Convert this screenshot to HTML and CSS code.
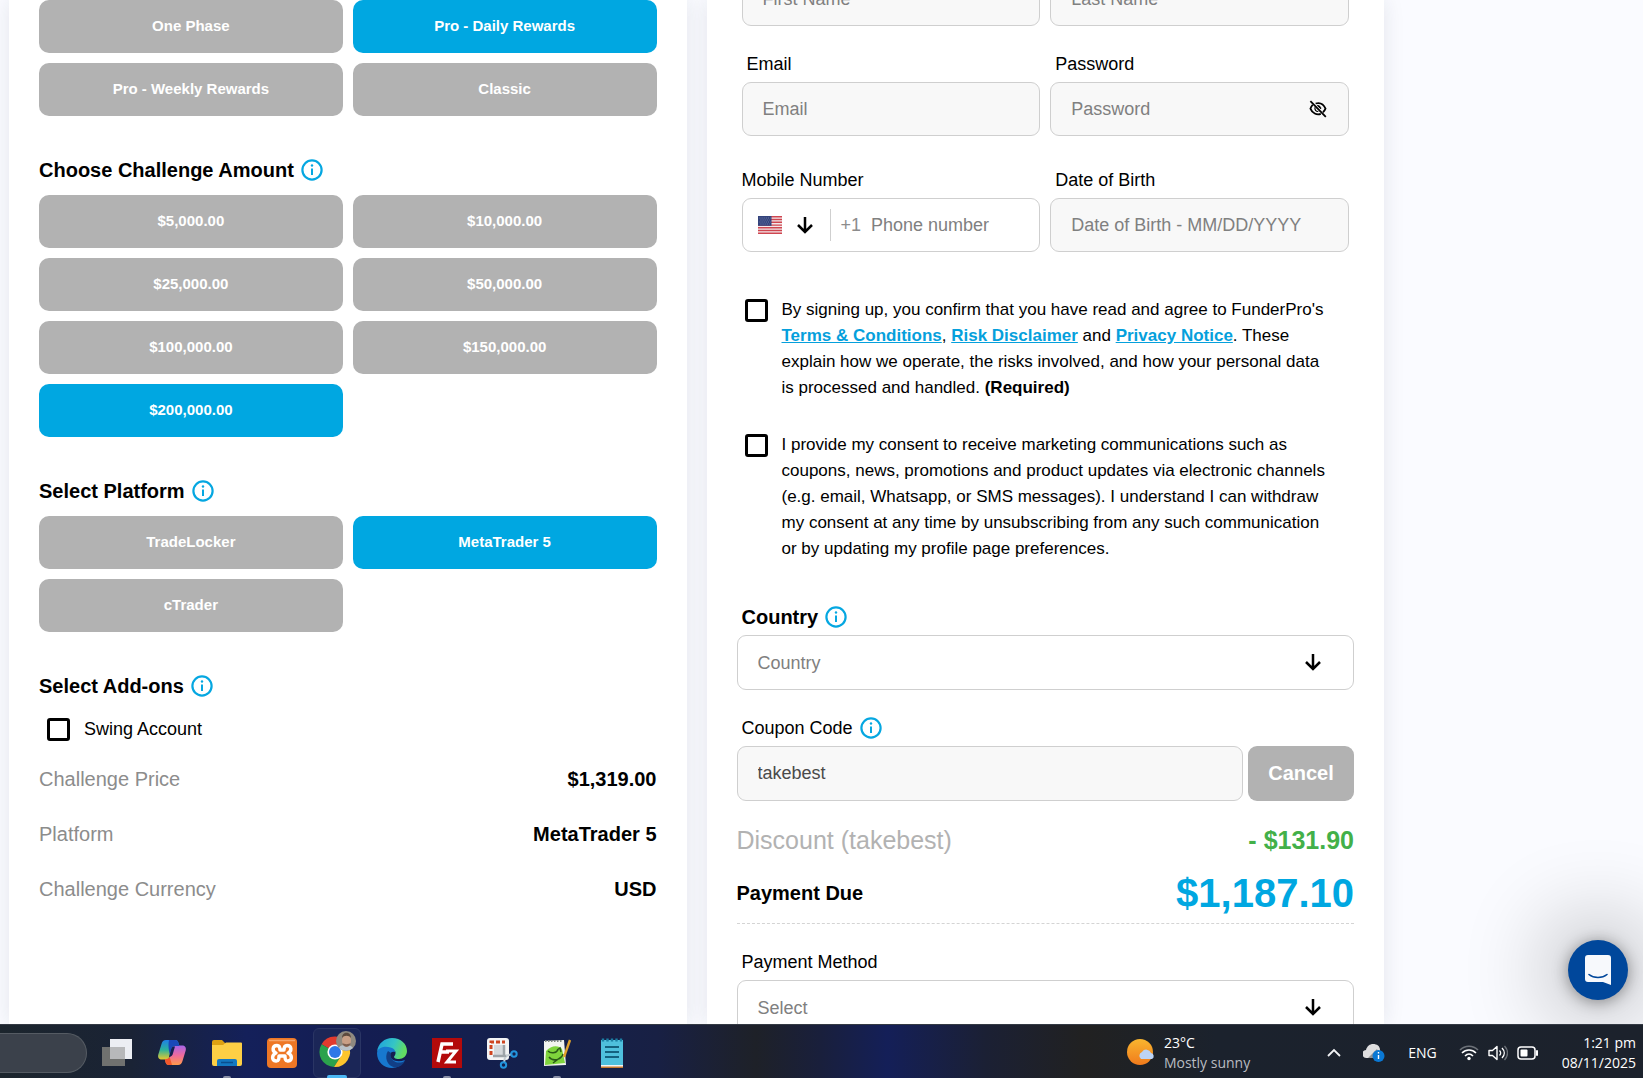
FILE: index.html
```html
<!DOCTYPE html>
<html lang="en">

<head>
  <meta charset="UTF-8" />
  <title>FunderPro Checkout</title>
  <meta name="viewport" content="width=device-width, initial-scale=1.0" />
  <link rel="stylesheet" href="styles.css">
</head>

<body>
  <!-- shared icons -->
  <svg class="sprite" aria-hidden="true">
    <symbol id="icon-info" viewBox="0 0 22 22">
      <circle cx="11" cy="11" r="9.6" fill="none" stroke="#05a7e1" stroke-width="2.2" />
      <path d="M11 9.4v6.6" stroke="#05a7e1" stroke-width="2" />
      <circle cx="11" cy="6.5" r="1.2" fill="#05a7e1" />
    </symbol>
    <symbol id="icon-arrow" viewBox="0 0 18 18">
      <path d="M9 1v15M2 9l7 7 7-7" fill="none" stroke="#000" stroke-width="2.5" />
    </symbol>
  </svg>

  <main class="page">
    <div class="columns">
      <section class="card challenge">
        <div class="options">
          <button class="option">One Phase</button>
          <button class="option active">Pro - Daily Rewards</button>
          <button class="option">Pro - Weekly Rewards</button>
          <button class="option">Classic</button>
        </div>

        <h2 class="section-title">Choose Challenge Amount <svg class="info"><use href="#icon-info" /></svg></h2>
        <div class="options">
          <button class="option">$5,000.00</button>
          <button class="option">$10,000.00</button>
          <button class="option">$25,000.00</button>
          <button class="option">$50,000.00</button>
          <button class="option">$100,000.00</button>
          <button class="option">$150,000.00</button>
          <button class="option active">$200,000.00</button>
        </div>

        <h2 class="section-title">Select Platform <svg class="info"><use href="#icon-info" /></svg></h2>
        <div class="options">
          <button class="option">TradeLocker</button>
          <button class="option active">MetaTrader 5</button>
          <button class="option">cTrader</button>
        </div>

        <h2 class="section-title">Select Add-ons <svg class="info"><use href="#icon-info" /></svg></h2>
        <div class="addon">
          <input type="checkbox" class="check" id="swing" />
          <label for="swing">Swing Account</label>
        </div>

        <dl class="summary">
          <div class="summary-row">
            <dt>Challenge Price</dt>
            <dd>$1,319.00</dd>
          </div>
          <div class="summary-row">
            <dt>Platform</dt>
            <dd>MetaTrader 5</dd>
          </div>
          <div class="summary-row">
            <dt>Challenge Currency</dt>
            <dd>USD</dd>
          </div>
        </dl>
      </section>

      <form class="card account">
        <div class="fields">
          <div class="field">
            <input type="text" class="control" placeholder="First Name" aria-label="First Name" />
          </div>
          <div class="field">
            <input type="text" class="control" placeholder="Last Name" aria-label="Last Name" />
          </div>
          <div class="field">
            <label class="indent" for="email">Email</label>
            <input type="email" class="control" id="email" placeholder="Email" />
          </div>
          <div class="field">
            <label class="indent" for="password">Password</label>
            <div class="password-box">
              <input type="password" class="control" id="password" placeholder="Password" />
              <button type="button" class="eye" aria-label="Show password">
                <svg width="18" height="18" viewBox="0 0 18 18" fill="none" stroke="#000" stroke-width="1.8">
                  <path d="M1.4 1.2l15.4 15.6" />
                  <path d="M6.6 3.5C11 2.2 14.7 4.400 16.500 8.600c-.6 1.500-1.400 2.700-2.500 3.600" />
                  <path d="M3.700 4.800C2.700 5.800 1.900 7.100 1.400 8.700c1.900 4.600 6.200 6.600 10.400 5.200" />
                  <path d="M8.400 5.600c1.900-.3 3.600 1.300 3.400 3.200z" fill="#000" stroke-width="1" />
                  <path d="M6.100 7.300c-.8 2.300.9 4.400 3.200 4.200" stroke-width="1.200" />
                </svg>
              </button>
            </div>
          </div>
          <div class="field spaced">
            <label for="phone">Mobile Number</label>
            <div class="phone-box">
              <button type="button" class="phone-country" aria-label="Country code">
                <svg width="24" height="18" viewBox="0 0 24 18">
                  <path d="M0 0h24v18H0z" fill="#f3e9ea" />
                  <path d="M0 .7h24M0 3.500h24M0 6.300h24M0 9.100h24M0 11.800h24M0 14.500h24M0 17.300h24" stroke="#cf4650" stroke-width="1.400" />
                  <path d="M0 0h13.500v9.800H0z" fill="#33437c" />
                  <path d="M1.500 2h11M2.500 4h9M1.500 6h11M2.500 8h9" stroke="#8e98bd" stroke-width=".8" stroke-dasharray=".9 1.200" />
                </svg>
                <svg class="arrow"><use href="#icon-arrow" /></svg>
              </button>
              <span class="dial-code">+1</span>
              <input type="tel" id="phone" placeholder="Phone number" />
            </div>
          </div>
          <div class="field spaced">
            <label class="indent" for="dob">Date of Birth</label>
            <input type="text" class="control" id="dob" placeholder="Date of Birth - MM/DD/YYYY" />
          </div>
        </div>

        <div class="consents">
          <div class="consent">
            <input type="checkbox" class="check" id="terms" />
            <label for="terms">By signing up, you confirm that you have read and agree to FunderPro's <a href="#">Terms &amp; Conditions</a>, <a href="#">Risk Disclaimer</a> and <a href="#">Privacy Notice</a>. These explain how we operate, the risks involved, and how your personal data is processed and handled. <b>(Required)</b></label>
          </div>
          <div class="consent">
            <input type="checkbox" class="check" id="marketing" />
            <label for="marketing">I provide my consent to receive marketing communications such as coupons, news, promotions and product updates via electronic channels (e.g. email, Whatsapp, or SMS messages). I understand I can withdraw my consent at any time by unsubscribing from any such communication or by updating my profile page preferences.</label>
          </div>
        </div>

        <div class="payment">
          <label class="payment-label strong" for="country">Country <svg class="info"><use href="#icon-info" /></svg></label>
          <div class="select-box">
            <select class="control" id="country">
              <option>Country</option>
            </select>
            <svg class="arrow"><use href="#icon-arrow" /></svg>
          </div>

          <label class="payment-label" for="coupon">Coupon Code <svg class="info"><use href="#icon-info" /></svg></label>
          <div class="coupon">
            <input type="text" class="control" id="coupon" value="takebest" />
            <button type="button" class="cancel">Cancel</button>
          </div>

          <div class="discount">
            <span>Discount (takebest)</span>
            <b>- $131.90</b>
          </div>
          <div class="due">
            <span>Payment Due</span>
            <b>$1,187.10</b>
          </div>

          <label class="payment-label" for="method">Payment Method</label>
          <div class="select-box">
            <select class="control" id="method">
              <option>Select</option>
            </select>
            <svg class="arrow"><use href="#icon-arrow" /></svg>
          </div>
        </div>
      </form>
    </div>

    <button class="chat-btn" aria-label="Open chat">
      <svg width="28" height="32" viewBox="0 0 28 32">
        <path d="M4 1h20a3 3 0 0 1 3 3v27l-8-3H4a3 3 0 0 1-3-3V4a3 3 0 0 1 3-3z" fill="#f7f9fc" />
        <path d="M5 20.500c5 4 13 4 18 0" fill="none" stroke="#00479b" stroke-width="1.600" stroke-linecap="round" />
      </svg>
    </button>
  </main>

  <footer class="taskbar">
    <div class="search-pill"></div>
    <div class="apps">
      <button class="app" aria-label="Task view">
        <svg width="32" height="32" viewBox="0 0 32 32">
          <path d="M9 2h22v20H9z" fill="#eceef3" />
          <path d="M1 10h23v19H1z" fill="#70716f" />
          <path d="M9 10h15v12H9z" fill="#b7b8ba" />
        </svg>
      </button>
      <button class="app" aria-label="Copilot">
        <svg width="32" height="32" viewBox="0 0 32 32">
          <defs>
            <linearGradient id="cop-a" x1="0" y1="0" x2="0" y2="1">
              <stop offset="0" stop-color="#1f7fe8" />
              <stop offset=".5" stop-color="#2bb39c" />
              <stop offset="1" stop-color="#e9c82c" />
            </linearGradient>
            <linearGradient id="cop-b" x1="0" y1="0" x2="0" y2="1">
              <stop offset="0" stop-color="#a765e8" />
              <stop offset=".5" stop-color="#ef6a9c" />
              <stop offset="1" stop-color="#ff9a4a" />
            </linearGradient>
          </defs>
          <path d="M10 3h9c2 0 3 1 3.500 3l.8 3H19c-2 0-3 1-3.500 3l-2.300 8c-.5 1.500-1.200 2.500-3 2.500H6c-3 0-4.500-2-3.700-5L5.500 7C6.300 4.500 7.500 3 10 3z" fill="url(#cop-a)" />
          <path d="M22 28h-9c-2 0-3-1-3.500-3L9 22h1.500c2 0 3-1 3.500-3l2.500-8c.5-1.500 1.200-2.500 3-2.500H26c3 0 4.500 2 3.700 5L26.500 24c-.8 2.500-2 4-4.500 4z" fill="url(#cop-b)" />
          <path d="M13 3h6c2 0 3 1 3.500 3l.8 3H19c-2 0-3 1-3.500 3l-1.700 6c-.6-4-2-8-.8-15z" fill="#1b49b8" />
          <path d="M9 22h1.500c1.600 0 2.600-.7 3.200-2L16 28h-3c-2 0-3-1-3.500-3z" fill="#f2572b" />
          <path d="M19 9.500h-1c-1.500 0-2.200 1.200-2.700 2.800L13 20c1.500-.2 3-.8 3.600-2.500z" fill="#16214f" />
        </svg>
      </button>
      <button class="app running" aria-label="File Explorer">
        <svg width="32" height="32" viewBox="0 0 32 32">
          <path d="M1 5a2 2 0 0 1 2-2h8l3 3v4H1z" fill="#dea112" />
          <path d="M1 8h11l3-2.500h15a1 1 0 0 1 1 1V27a2 2 0 0 1-2 2H3a2 2 0 0 1-2-2z" fill="#fdcf45" />
          <path d="M6 29v-5a2 2 0 0 1 2-2h16a2 2 0 0 1 2 2v5z" fill="#1478c2" />
          <path d="M10 25.500h12" stroke="#0a4f8f" stroke-width="1.500" />
        </svg>
      </button>
      <button class="app" aria-label="XAMPP">
        <svg width="32" height="32" viewBox="0 0 32 32">
          <rect x="1" y="1" width="30" height="30" rx="4" fill="#ee7725" />
          <path d="M3 3.500h26" stroke="#f6a56b" stroke-width="1.500" />
          <path d="M11 8.500c-5 0-5 6-1 7.500-4 1.500-5 7.500 0 8 3 .2 3-3 3-5h6c0 2 0 5.200 3 5 5-.5 4-6.500 0-8 4-1.500 4-7.500-1-7.500-3 0-3 2.500-3 4.500h-4c0-2 0-4.500-3-4.500z" fill="none" stroke="#fff" stroke-width="3.400" stroke-linejoin="round" />
        </svg>
      </button>
      <button class="app current" aria-label="Chrome">
        <svg width="38" height="38" viewBox="0 0 38 38">
          <path d="M17 21L3.600 13.300A15 15 0 0 1 30.500 14.500L17 14z" fill="#e23b2e" />
          <path d="M17 21L23 25 16 36A15 15 0 0 1 3.600 13.300z" fill="#2ba24c" />
          <path d="M17 14h13.200A15 15 0 0 1 16 36l7-11z" fill="#fdc52d" />
          <circle cx="17" cy="21" r="7.600" fill="#fff" />
          <circle cx="17" cy="21" r="6" fill="#2f78e8" />
          <circle cx="28" cy="10" r="10" fill="#8f8a80" />
          <path d="M21 17c1-3 4-3 7-3s6 1 7 3a10 10 0 0 1-14 0z" fill="#b9c2c9" />
          <ellipse cx="28.500" cy="9.500" rx="4.500" ry="6.500" fill="#c99f86" />
          <path d="M24 7c0-7 9-7 9 0-2-3-7-3-9 0z" fill="#5d4a3e" />
          <path d="M24.500 12c1.500 1.500 6.500 1.500 8 0 0 5-8 5-8 0z" fill="#7d5f50" />
        </svg>
      </button>
      <button class="app" aria-label="Edge">
        <svg width="32" height="32" viewBox="0 0 32 32">
          <defs>
            <linearGradient id="edge-a" x1="0" y1="0" x2="1" y2=".3">
              <stop offset="0" stop-color="#1d9fe0" />
              <stop offset=".6" stop-color="#35c5c5" />
              <stop offset="1" stop-color="#62dc62" />
            </linearGradient>
          </defs>
          <path d="M1 16C2 9 8 7 13 8c4 1 7 4 6 7-3-1-5 1-5 3 0 5 7 8 15 5-3 5-8 8-13 8C8 31 1 25 1 16z" fill="#1778cf" />
          <path d="M1 15C2 6 9 1 16 1c9 0 15 6 15 13 0 5-4 8-8 8-4 0-6-1.500-4.500-3 2.500-3 .5-7.500-4-8.500C9 9 3 10 1 15z" fill="url(#edge-a)" />
          <path d="M12 14c-4 6-1 15 7 16.500 5-.5 8-3 10-6.500-7 4-16 0-14-8z" fill="#123f86" />
        </svg>
      </button>
      <button class="app running" aria-label="FileZilla">
        <svg width="32" height="32" viewBox="0 0 32 32">
          <path d="M1 1h30v30H1z" fill="#b30a0b" />
          <path d="M7 25L11 7h11M9 15h9" fill="none" stroke="#fff" stroke-width="3.500" />
          <path d="M15 14h10l-9 11h9" fill="none" stroke="#fff" stroke-width="3" />
        </svg>
      </button>
      <button class="app" aria-label="Snipping Tool">
        <svg width="32" height="32" viewBox="0 0 32 32">
          <rect x="1" y="1" width="22" height="22" rx="3" fill="#f3f4f5" />
          <path d="M5 18V5h14" fill="none" stroke="#cf4520" stroke-width="3" stroke-dasharray="4 2" />
          <path d="M8 8h10v11H8z" fill="#d6d9dc" />
          <path d="M18 8v12M7 19h14" stroke="#9da3a8" stroke-width="2.500" />
          <path d="M20 19l6-2M19 20l-1 6" stroke="#c3ccd2" stroke-width="2" />
          <circle cx="28" cy="17" r="2.700" fill="none" stroke="#2294dd" stroke-width="2" />
          <circle cx="17.500" cy="28" r="2.700" fill="none" stroke="#2294dd" stroke-width="2" />
        </svg>
      </button>
      <button class="app running" aria-label="Notepad++">
        <svg width="32" height="32" viewBox="0 0 32 32">
          <path d="M3 4l20-1 2 25-22 1z" fill="#f1f4ee" />
          <path d="M5 14c5-6 13-6 16-2l3 14-20 2z" fill="#7fd43c" />
          <path d="M7 14c3 3 8 2 10-1M16 13l3-2 1 4M8 20c4 5 12 3 14-3M12 26l8-6" fill="none" stroke="#2a5a17" stroke-width="1.500" />
          <path d="M4 4h18" stroke="#7c8480" stroke-width="2" stroke-dasharray="1.500 1.500" />
          <path d="M29 3l-6 17" stroke="#e0a22b" stroke-width="2.400" />
        </svg>
      </button>
      <button class="app" aria-label="Notepad">
        <svg width="32" height="32" viewBox="0 0 32 32">
          <path d="M5 27h22v4H5z" fill="#c77b2e" />
          <path d="M5 3h22v25H5z" fill="#4fc0dd" />
          <path d="M5 28h22v1.500H5z" fill="#f4f4f4" />
          <path d="M9 10h14M9 15h14M9 20h14" stroke="#14617f" stroke-width="1.800" />
          <path d="M7 1.500v3M11.500 1.500v3M16 1.500v3M20.500 1.500v3M25 1.500v3" stroke="#1b7fa3" stroke-width="2.400" />
        </svg>
      </button>
    </div>

    <div class="weather">
      <svg width="30" height="30" viewBox="0 0 30 30">
        <defs>
          <linearGradient id="sun" x1="0" y1="0" x2="0" y2="1">
            <stop offset="0" stop-color="#f9b62f" />
            <stop offset="1" stop-color="#f07a1c" />
          </linearGradient>
        </defs>
        <circle cx="14" cy="14" r="13" fill="url(#sun)" />
        <path d="M15 21a4 4 0 0 1 1-7 5 5 0 0 1 9 1 3.200 3.200 0 0 1 1 6z" fill="#bcd3f5" />
      </svg>
      <div>
        <div>23°C</div>
        <div class="muted">Mostly sunny</div>
      </div>
    </div>

    <div class="tray">
      <svg width="16" height="16" viewBox="0 0 16 16">
        <path d="M2 11l6-6 6 6" fill="none" stroke="#f2f3f5" stroke-width="1.800" />
      </svg>
      <svg class="cloud" width="22" height="20" viewBox="0 0 22 20">
        <path d="M4 15a4 4 0 0 1-1-8C4 3 7 1 10 1c4 0 7 2 7 6v8z" fill="#dededf" />
        <path d="M5 15l9-9 4 9z" fill="#8f9092" />
        <circle cx="15.500" cy="13" r="6" fill="#0a78d4" />
        <path d="M15.500 12v4M15.500 9v1.600" stroke="#fff" stroke-width="1.400" />
      </svg>
      <span class="lang">ENG</span>
      <div class="status">
        <svg width="20" height="18" viewBox="0 0 20 18" fill="none" stroke-width="1.600">
          <path d="M1 6c5-5 13-5 18 0" stroke="#6c7178" />
          <path d="M3 9c4-4 10-4 14 0M6 12c2.500-2.500 5.500-2.500 8 0" stroke="#fff" />
          <circle cx="10" cy="14.500" r="1.700" fill="#fff" />
        </svg>
        <svg width="20" height="18" viewBox="0 0 20 18" fill="none" stroke="#fff" stroke-width="1.400">
          <path d="M1 6.500h3.500L9 2.500v13l-4.500-4H1z" stroke-linejoin="round" />
          <path d="M11.500 6.500c1.500 1.500 1.500 3.500 0 5M14 4c3 3 3 7 0 10" />
          <path d="M16.500 2c4 4 4 10 0 14" stroke="#6c7178" />
        </svg>
        <svg width="22" height="18" viewBox="0 0 22 18">
          <rect x="1" y="3" width="17" height="12" rx="3" fill="none" stroke="#fff" stroke-width="1.500" />
          <rect x="3.500" y="5.500" width="7" height="7" rx="1" fill="#fff" />
          <path d="M20 7v4" stroke="#fff" stroke-width="2" stroke-linecap="round" />
        </svg>
      </div>
      <div class="clock">
        <div>1:21 pm</div>
        <div>08/11/2025</div>
      </div>
    </div>
  </footer>
</body>

</html>
```

FILE: styles.css
```css
* {
  box-sizing: border-box;
}

body {
  margin: 0;
  height: 100vh;
  display: flex;
  flex-direction: column;
  overflow: hidden;
  font-family: "Liberation Sans", Arial, sans-serif;
  font-size: 18px;
  color: #000;
}

button,
input,
select {
  font-family: inherit;
}

button {
  cursor: pointer;
}

.sprite {
  position: absolute;
  width: 0;
  height: 0;
}

.page {
  flex: 1;
  min-height: 0;
  position: relative;
  overflow: hidden;
  background: #fafbff;
}

.columns {
  display: grid;
  grid-template-columns: 1fr 1fr;
  gap: 20px;
  height: 100%;
  padding: 0 259px 0 9px;
}

.card {
  background: #fff;
  box-shadow: 0 0 20px rgba(30, 40, 70, 0.1);
  overflow: hidden;
}

.info {
  width: 22px;
  height: 22px;
  flex: none;
}

.arrow {
  width: 18px;
  height: 18px;
  flex: none;
}

/* left card */

.challenge {
  padding: 0 30px;
}

.options {
  display: grid;
  grid-template-columns: 1fr 1fr;
  gap: 10px;
}

.option {
  height: 53px;
  padding: 0 6px 3px;
  border: none;
  border-radius: 10px;
  background: #b2b2b2;
  color: #fff;
  font-size: 15px;
  font-weight: bold;
}

.option.active {
  background: #00a7e1;
}

.section-title {
  display: flex;
  align-items: center;
  gap: 7px;
  margin: 42px 0 13px;
  font-size: 20px;
  line-height: 24px;
}

.addon {
  display: flex;
  align-items: center;
  gap: 14px;
  padding: 7px 8px 0;
}

.check {
  appearance: none;
  flex: none;
  width: 23px;
  height: 23px;
  margin: 0;
  border: 3px solid #000;
  border-radius: 3px;
  background: #fff;
}

.summary {
  margin: 11px 0 0;
  font-size: 20px;
}

.summary-row {
  display: flex;
  justify-content: space-between;
  align-items: center;
  height: 55px;
}

.summary dt {
  color: #8c8c8c;
}

.summary dd {
  margin: 0;
  font-weight: bold;
}

/* right card */

.account {
  padding: 0 30px;
}

.fields {
  display: grid;
  grid-template-columns: repeat(2, minmax(0, 1fr));
  gap: 27px 10px;
  margin: -28px 5px 0;
}

.field label {
  display: block;
  padding-bottom: 7px;
  line-height: 22px;
}

.field .indent {
  padding-left: 5px;
}

.field.spaced {
  padding-top: 6px;
}

.control {
  display: block;
  width: 100%;
  height: 54px;
  padding: 0 20px;
  border: 1px solid #cfcfcf;
  border-radius: 9px;
  background: #f8f8f8;
  font-size: 18px;
  color: #4a4a4a;
}

::placeholder {
  color: #808080;
  opacity: 1;
}

.password-box,
.select-box {
  position: relative;
}

.eye {
  position: absolute;
  top: 18px;
  right: 22px;
  width: 18px;
  height: 18px;
  padding: 0;
  border: none;
  background: none;
}

.phone-box {
  display: flex;
  align-items: center;
  height: 54px;
  border: 1px solid #cfcfcf;
  border-radius: 9px;
}

.phone-country {
  display: flex;
  align-items: center;
  gap: 14px;
  height: 32px;
  padding: 0 16px 0 15px;
  border: none;
  border-right: 1px solid #cfcfcf;
  background: none;
}

.dial-code {
  padding: 0 10px;
  color: #8c8c8c;
}

.phone-box input {
  flex: 1;
  min-width: 0;
  padding: 0;
  border: none;
  outline: none;
  font-size: 18px;
}

.consents {
  display: flex;
  flex-direction: column;
  gap: 31px;
  padding: 45px 24px 0 8px;
}

.consent {
  display: flex;
  gap: 14px;
}

.consent .check {
  margin-top: 2px;
}

.consent label {
  font-size: 17px;
  line-height: 26px;
}

.consent a {
  color: #05a0dc;
  font-weight: bold;
}

.payment {
  padding-top: 17px;
}

.payment-label {
  display: flex;
  align-items: center;
  gap: 7px;
  height: 22px;
  margin: 27px 5px 7px;
}

.payment-label.strong {
  font-size: 20px;
  font-weight: bold;
}

.payment .control {
  height: 55px;
}

.select-box select {
  appearance: none;
  background: #fff;
  color: #808080;
}

.select-box .arrow {
  position: absolute;
  top: 18px;
  right: 32px;
  pointer-events: none;
}

.coupon {
  display: flex;
  gap: 5px;
}

.cancel {
  flex: none;
  width: 106px;
  border: none;
  border-radius: 9px;
  background: #b2b2b2;
  color: #fff;
  font-size: 20px;
  font-weight: bold;
}

.discount,
.due {
  display: flex;
  justify-content: space-between;
  align-items: center;
}

.discount {
  margin-top: 24px;
  font-size: 25px;
  line-height: 30px;
  color: #b2b2b2;
}

.discount b {
  color: #43b049;
}

.due {
  padding: 8px 0 0;
  height: 69px;
  border-bottom: 1px dashed #d4d4d4;
  font-size: 20px;
  font-weight: bold;
}

.due b {
  font-size: 40px;
  color: #00a7e1;
}

.chat-btn {
  position: absolute;
  right: 15px;
  bottom: 24px;
  display: flex;
  align-items: center;
  justify-content: center;
  width: 60px;
  height: 60px;
  border: none;
  border-radius: 50%;
  background: #00479b;
  box-shadow: 0 2px 16px rgba(0, 0, 0, 0.4), 0 0 90px 16px rgba(0, 0, 0, 0.32);
}

/* taskbar */

.taskbar {
  display: flex;
  align-items: center;
  height: 54px;
  padding: 3px 7px 0 0;
  border-top: 1px solid #343a44;
  background: linear-gradient(90deg, #1c252d 0, #1a2335 8%, #14205a 15%, #141d52 22%, #14204c 32%, #182044 40%, #1e2128 46%, #191f3c 50%, #141f58 54%, #1b2034 60%, #212121 66%, #1b222d 74%, #1c222c 100%);
  color: #fff;
  font-family: "Open Sans", "Noto Sans", sans-serif;
  font-size: 14px;
  line-height: 20px;
}

.search-pill {
  width: 87px;
  height: 40px;
  border: 1px solid #555b63;
  border-left: none;
  border-radius: 0 20px 20px 0;
  background: #3b414b;
}

.apps {
  display: flex;
  gap: 7px;
  margin-left: 6px;
}

.app {
  position: relative;
  display: flex;
  align-items: center;
  justify-content: center;
  width: 48px;
  height: 50px;
  padding: 0;
  border: none;
  border-radius: 6px;
  background: none;
}

.app.current {
  padding-bottom: 6px;
  border: 1px solid #2a3564;
  background: #1b2657;
}

.app.running::after,
.app.current::after {
  content: "";
  position: absolute;
  bottom: -2px;
  width: 8px;
  height: 4px;
  border-radius: 2px;
  background: #8b91a8;
}

.app.current::after {
  width: 20px;
  background: #4cb8f5;
}

.weather {
  display: flex;
  align-items: center;
  gap: 8px;
  margin-left: auto;
}

.muted {
  color: #b9bcc1;
}

.tray {
  display: flex;
  align-items: center;
  margin-left: 76px;
}

.cloud {
  margin-left: 21px;
}

.lang {
  margin-left: 23px;
}

.status {
  display: flex;
  gap: 9px;
  margin-left: 22px;
}

.clock {
  margin-left: 23px;
  text-align: right;
}
```
